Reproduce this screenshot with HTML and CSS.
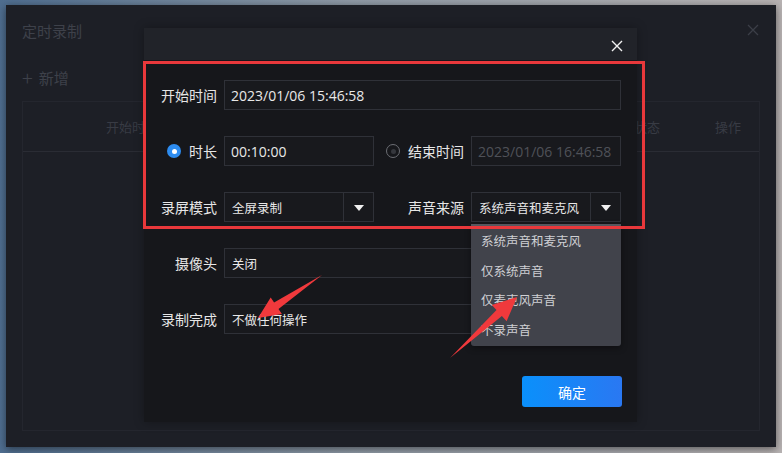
FILE: index.html
```html
<!DOCTYPE html>
<html lang="zh-CN">
<head>
  <meta charset="UTF-8">
  <meta name="viewport" content="width=device-width, initial-scale=1.0">
  <title>定时录制</title>
  <link rel="stylesheet" href="styles.css">
</head>
<body>
  <div class="window">
    <div class="win-head">
      <span class="win-title">定时录制</span>
      <svg class="win-close" width="12" height="12" viewBox="0 0 12 12">
        <path d="M1 1 L11 11 M11 1 L1 11" stroke="#3b3e47" stroke-width="1.3" fill="none"/>
      </svg>
    </div>
    <div class="toolbar"><span class="plus">+</span> 新增</div>
    <div class="table">
      <div class="table-head">
        <span>开始时间</span>
        <span></span>
        <span>状态</span>
        <span>操作</span>
      </div>
    </div>

    <div class="dialog">
      <div class="dialog-head">
        <svg class="dialog-close" width="12" height="12" viewBox="0 0 12 12">
          <path d="M1 1 L11 11 M11 1 L1 11" stroke="#f2f2f2" stroke-width="1.4" fill="none"/>
        </svg>
      </div>
      <div class="dialog-body">
        <div class="form">
          <label class="label">开始时间</label>
          <div class="field wide">2023/01/06 15:46:58</div>

          <label class="label"><span class="radio checked"></span>时长</label>
          <div class="field">00:10:00</div>
          <label class="label"><span class="radio"></span>结束时间</label>
          <div class="field disabled">2023/01/06 16:46:58</div>

          <label class="label">录屏模式</label>
          <div class="select"><span>全屏录制</span><span class="caret"></span></div>
          <label class="label">声音来源</label>
          <div class="select"><span>系统声音和麦克风</span><span class="caret"></span></div>

          <label class="label">摄像头</label>
          <div class="select wide"><span>关闭</span><span class="caret"></span></div>

          <label class="label">录制完成</label>
          <div class="select wide"><span>不做任何操作</span><span class="caret"></span></div>
        </div>
        <div class="footer">
          <button class="ok-btn">确定</button>
        </div>
      </div>

      <ul class="dropdown">
        <li>系统声音和麦克风</li>
        <li>仅系统声音</li>
        <li>仅麦克风声音</li>
        <li>不录声音</li>
      </ul>
    </div>

    <div class="highlight"></div>

    <svg class="arrows" width="782" height="453" viewBox="0 0 782 453">
      <polygon fill="#f0393c" points="322,275 278.5,309 281.9,314 258,318 270.7,297.4 274.1,302.4"/>
      <polygon fill="#f0393c" points="450,358 501.9,316.1 506.6,321.2 517,297 491.8,305 496.5,310.1"/>
    </svg>
  </div>
</body>
</html>
```

FILE: styles.css
```css
* {
  box-sizing: border-box;
}

body {
  margin: 0;
  width: 782px;
  height: 453px;
  padding: 5px 6px;
  overflow: hidden;
  font-family: "Noto Sans CJK SC", sans-serif;
  background: linear-gradient(90deg, #4f6e90 0%, #8f9aa6 45%, #b8b3b3 100%);
}

.window {
  position: relative;
  width: 770px;
  height: 442px;
  background-color: #1d1f26;
  box-shadow: 0 2px 8px rgba(0, 0, 0, 0.5);
}

.win-head {
  height: 48px;
  padding: 2px 17px 0 16px;
  display: flex;
  align-items: center;
  justify-content: space-between;
  color: #3e414a;
  font-size: 15px;
}

.toolbar {
  height: 48px;
  padding: 0 16px;
  display: flex;
  align-items: center;
  gap: 6px;
  color: #3e414a;
  font-size: 15px;
}

.plus {
  font-size: 20px;
  font-weight: 300;
}

.table {
  margin: 0 16px;
  height: 330px;
  border: 1px solid #24262e;
}

.table-head {
  height: 50px;
  display: grid;
  grid-template-columns: 218px 1fr 100px 62px;
  align-items: center;
  text-align: center;
  color: #383b44;
  font-size: 13px;
  border-bottom: 1px solid #2a2c34;
}

/* dialog over the window */
.dialog {
  position: absolute;
  left: 138px;
  top: 23px;
  width: 493px;
  height: 394px;
  background-color: #16171b;
  box-shadow: 0 0 10px rgba(0, 0, 0, 0.3);
}

.dialog-head {
  height: 32px;
  background-color: #212329;
  display: flex;
  justify-content: flex-end;
  align-items: center;
  padding: 4px 14px 0 0;
}

.dialog-body {
  padding: 20px 16px 15px 17px;
}

.form {
  display: grid;
  grid-template-columns: 56px 150px 83px 150px;
  grid-auto-rows: 30px;
  column-gap: 7px;
  row-gap: 26px;
}

.label {
  display: flex;
  align-items: center;
  justify-content: flex-end;
  white-space: nowrap;
  color: #e6e6e6;
  font-size: 14px;
}

.radio {
  width: 14px;
  height: 14px;
  margin-right: 8px;
  border-radius: 50%;
  border: 1.5px solid #6c6e74;
  display: flex;
  align-items: center;
  justify-content: center;
}

.radio::after {
  content: "";
  width: 5px;
  height: 5px;
  border-radius: 50%;
  background-color: #35373d;
}

.radio.checked {
  border: none;
  background-color: #2d8cf0;
}

.radio.checked::after {
  background-color: #fff;
}

.field,
.select {
  display: flex;
  align-items: center;
  border: 1px solid #2f3138;
  background-color: #18191d;
  color: #e8e8e8;
}

.field {
  padding: 0 6px;
  font-family: "Open Sans", "Noto Sans CJK SC", sans-serif;
  font-size: 14px;
}

.field.disabled {
  color: #4f5158;
}

.wide {
  grid-column: 2 / 5;
}

.select {
  justify-content: space-between;
  padding-left: 7px;
  font-size: 12.5px;
}

.caret {
  width: 30px;
  height: 100%;
  border-left: 1px solid #2f3138;
  display: flex;
  align-items: center;
  justify-content: center;
}

.caret::after {
  content: "";
  border-left: 5px solid transparent;
  border-right: 5px solid transparent;
  border-top: 6px solid #f0f0f0;
  margin-top: 1px;
}

.footer {
  margin-top: 42px;
  display: flex;
  justify-content: flex-end;
}

.ok-btn {
  width: 100px;
  height: 31px;
  margin-right: -1px;
  border: none;
  border-radius: 3px;
  background: linear-gradient(90deg, #0a90fb, #2a78f2);
  color: #fff;
  font-family: "Noto Sans CJK SC", sans-serif;
  font-size: 14px;
}

.dropdown {
  position: absolute;
  left: 327px;
  top: 196px;
  width: 150px;
  height: 122px;
  margin: 0;
  padding: 2px 0 0;
  list-style: none;
  background-color: #41434b;
  box-shadow: inset 0 2px 0 #55575e, 0 2px 6px rgba(0, 0, 0, 0.4);
  border-radius: 0 0 3px 3px;
}

.dropdown li {
  height: 29.5px;
  line-height: 29px;
  padding-left: 10px;
  color: #cfd0d4;
  font-size: 12.5px;
}

/* annotation marks */
.highlight {
  position: absolute;
  left: 137px;
  top: 56px;
  width: 502px;
  height: 168px;
  border: 3px solid #e8383b;
}

.arrows {
  position: absolute;
  left: -6px;
  top: -5px;
}
```
